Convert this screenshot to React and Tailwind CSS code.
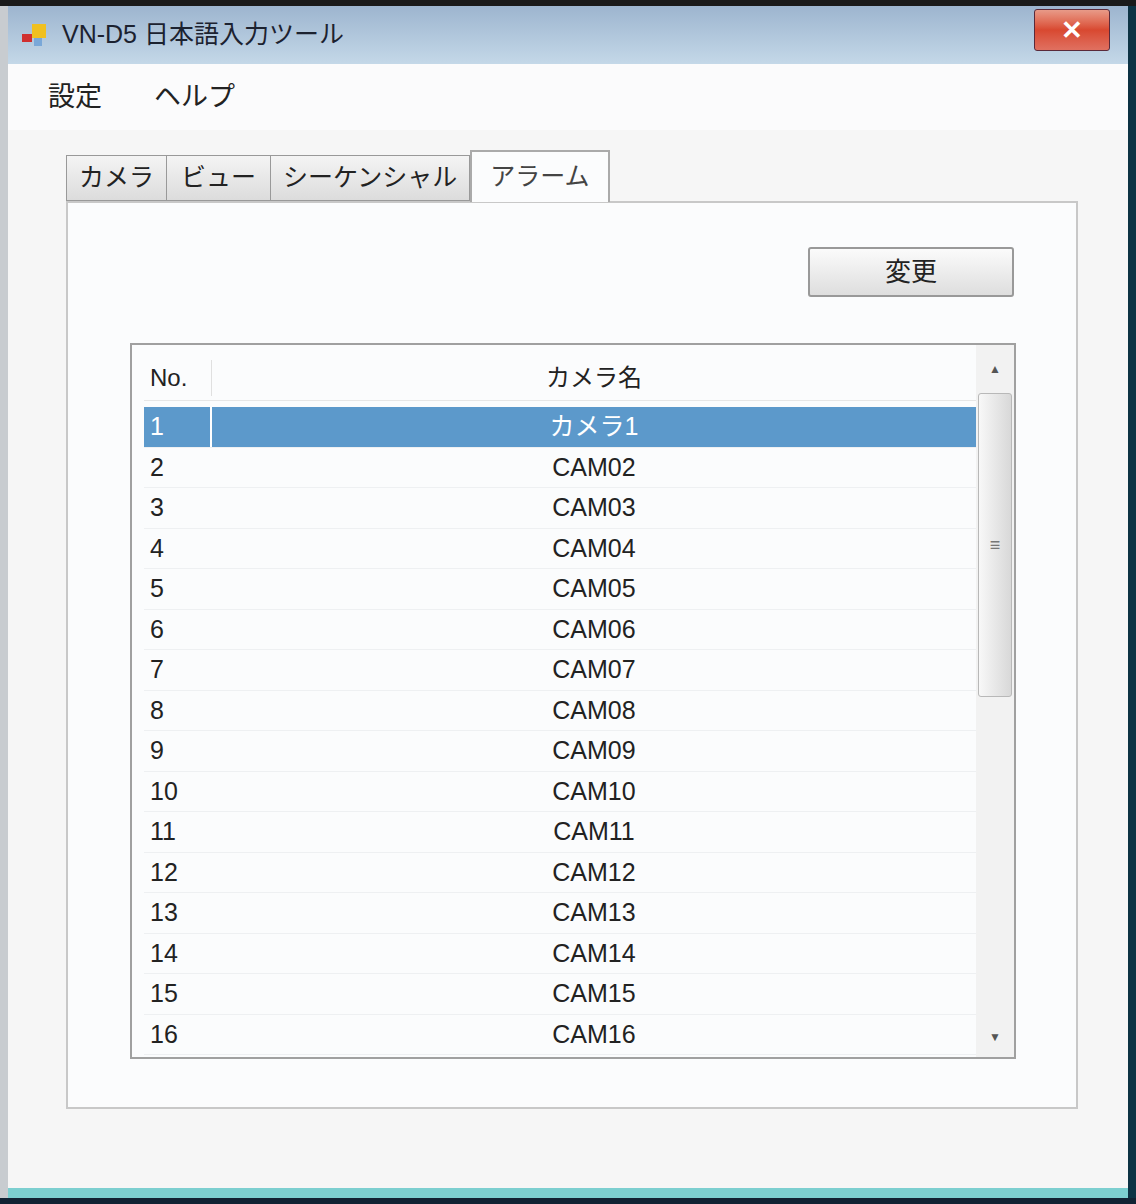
import React from 'react';

const rows = [
  ['1', 'カメラ1'], ['2', 'CAM02'], ['3', 'CAM03'], ['4', 'CAM04'], ['5', 'CAM05'], ['6', 'CAM06'],
  ['7', 'CAM07'], ['8', 'CAM08'], ['9', 'CAM09'], ['10', 'CAM10'], ['11', 'CAM11'], ['12', 'CAM12'],
  ['13', 'CAM13'], ['14', 'CAM14'], ['15', 'CAM15'], ['16', 'CAM16'],
];

const font = { fontFamily: '"Liberation Sans Narrow", "Liberation Sans", "Noto Sans CJK JP", sans-serif' };

function App() {
  return (
    <div className="w-[1136px] h-[1204px] bg-[#1a1a1a] pt-[6px] flex flex-col text-[#222]" style={font}>
      <div className="flex-1 flex flex-col bg-[#f6f6f6] border-l-[8px] border-l-[#c8ccd0] border-r-[8px] border-r-[#0d3344]">
        {/* title bar */}
        <div className="h-[58px] flex items-center px-3 bg-gradient-to-b from-[#9db5cf] to-[#c4d8e8]">
          <svg width="30" height="30" viewBox="0 0 30 30" className="mr-3">
            <rect x="2" y="14" width="10" height="8" fill="#d03030" />
            <rect x="12" y="4" width="14" height="14" fill="#f0c020" />
            <rect x="14" y="18" width="8" height="8" fill="#7aa8d8" />
          </svg>
          <span className="text-[25px] text-[#1c2230]">VN-D5 日本語入力ツール</span>
          <div className="ml-auto mr-[6px] w-[76px] h-[42px] mt-[-10px] rounded-[3px] border border-[#5a2a3a] bg-gradient-to-b from-[#e89a88] via-[#d84830] to-[#e07060] flex items-center justify-center text-white text-[26px] font-bold">✕</div>
        </div>
        {/* menu */}
        <div className="h-[66px] bg-[#fbfbfc] flex items-center gap-[52px] pl-[40px] text-[27px]">
          <span>設定</span>
          <span>ヘルプ</span>
        </div>
        {/* tabs */}
        <div className="pl-[58px] pt-[20px] flex items-end text-[25px]">
          <div className="h-[46px] px-[12px] border border-[#999] border-r-0 bg-gradient-to-b from-[#f4f4f4] to-[#dcdcdc] flex items-center">カメラ</div>
          <div className="h-[46px] px-[14px] border border-[#999] border-r-0 bg-gradient-to-b from-[#f4f4f4] to-[#dcdcdc] flex items-center">ビュー</div>
          <div className="h-[46px] px-[12px] border border-[#999] bg-gradient-to-b from-[#f4f4f4] to-[#dcdcdc] flex items-center">シーケンシャル</div>
          <div className="h-[52px] px-[18px] border-2 border-b-0 border-[#aaa] bg-[#fbfcfd] flex items-center mb-[-1px] relative z-10 text-[#444]">アラーム</div>
        </div>
        <div className="ml-[58px] mr-[50px] h-[908px] border-2 border-[#c8c8c8] bg-[#fbfcfd] flex flex-col">
          <div className="flex justify-end pr-[62px] pt-[44px]">
            <div className="w-[206px] h-[50px] border-2 border-[#999] rounded-[3px] bg-gradient-to-b from-[#fbfbfb] to-[#dedede] flex items-center justify-center text-[26px]">変更</div>
          </div>
          {/* list */}
          <div className="ml-[62px] mr-[60px] mt-[46px] h-[716px] border-2 border-[#a0a0a0] bg-[#fbfcfd] flex">
            <div className="flex-1 pl-[12px] pt-[10px]">
              <div className="h-[46px] flex items-center text-[24px] border-b border-[#e6e6e6]">
                <div className="w-[68px] pl-[6px] border-r border-[#e0e0e0]">No.</div>
                <div className="flex-1 text-center">カメラ名</div>
              </div>
              <div className="mt-[6px]">
                {rows.map(([n, name], i) => (
                  <div key={n} className={`h-[40.5px] flex items-center text-[25px] border-b border-[#eef0f2] ${i === 0 ? 'bg-[#5c99cb] text-white' : ''}`}>
                    <div className={`w-[68px] pl-[6px] h-full flex items-center ${i === 0 ? 'border-r-2 border-white' : ''}`}>{n}</div>
                    <div className="flex-1 text-center">{name}</div>
                  </div>
                ))}
              </div>
            </div>
            <div className="w-[38px] bg-[#f2f2f2] flex flex-col items-center">
              <div className="h-[48px] flex items-center text-[12px] text-[#555]">▲</div>
              <div className="w-[34px] h-[304px] border border-[#b8b8b8] rounded-[3px] bg-gradient-to-r from-[#f8f8f8] to-[#d8d8d8] flex items-center justify-center text-[#777] text-[18px]">≡</div>
              <div className="flex-1" />
              <div className="h-[40px] flex items-center text-[12px] text-[#555]">▼</div>
            </div>
          </div>
        </div>
        <div className="flex-1" />
        <div className="h-[10px] bg-[#7ccfd0]" />
      </div>
      <div className="h-[6px] bg-[#123]" />
    </div>
  );
}

export default App;
